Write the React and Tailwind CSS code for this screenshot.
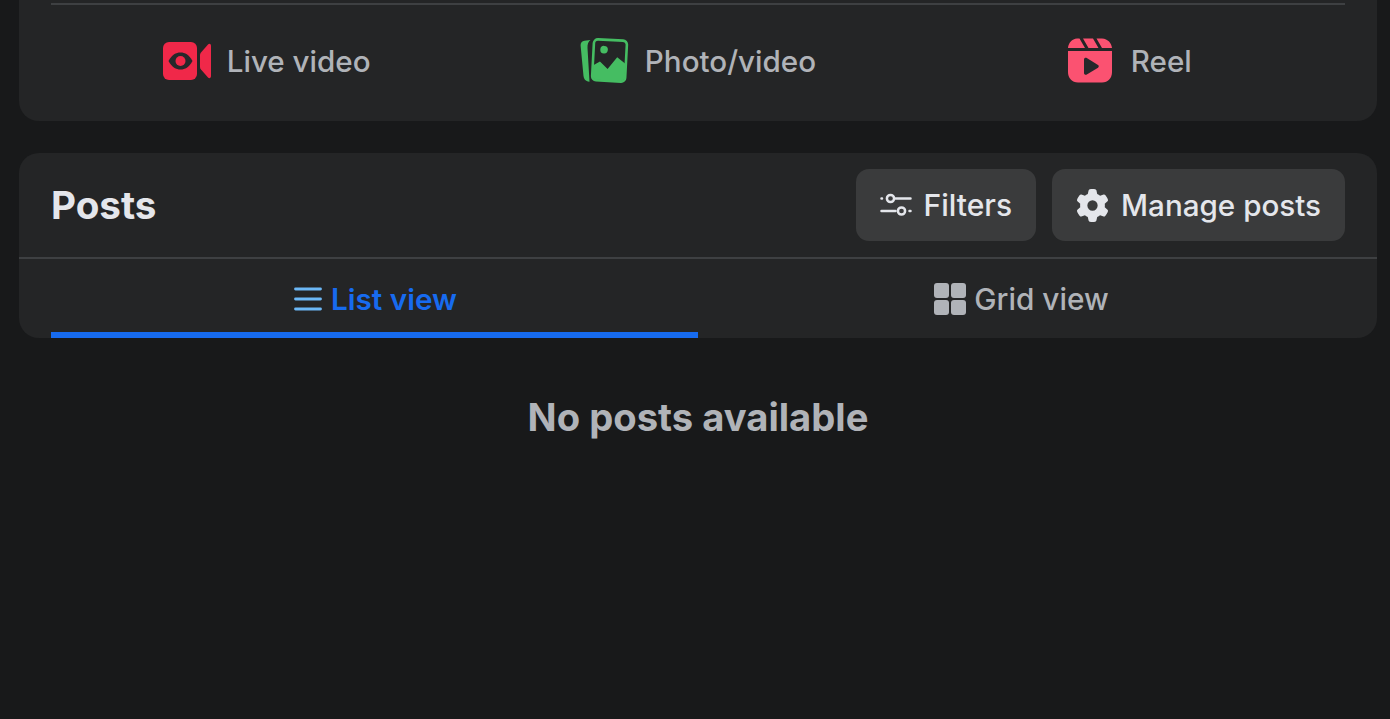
import { FaGear } from 'react-icons/fa6';

const LiveIcon = () => (
  <svg width="48" height="38" viewBox="0 0 48 38" className="shrink-0">
    <rect x="0" y="0" width="34" height="38" rx="6" fill="#f02849" />
    <path d="M38 10.500 45 2.500C46.400 1.200 48 2 48 4V34C48 36 46.400 36.800 45 35.500L38 27.500C37.400 26.800 37 26 37 25V13C37 12 37.400 11.200 38 10.500Z" fill="#f02849" />
    <path d="M5.500 19C9 12.500 13 10.500 17.500 10.500S26 12.500 29.500 19C26 25.500 22 27.500 17.500 27.500S9 25.500 5.500 19Z" fill="#26282b" />
    <circle cx="17.500" cy="19" r="5" fill="#f02849" />
  </svg>
);

const PhotoIcon = () => (
  <svg width="49" height="46" viewBox="0 0 49 46" className="shrink-0">
    <path d="M10.500 2 4.500 2.800C2 3.200 .4 5 .6 7.500L3.500 38C3.800 41 5.500 43 8 43.500L9.500 43.800 7.500 10C7.300 6 8.500 3.500 10.500 2Z" fill="#45bd62" />
    <g transform="rotate(3 30 23)">
      <rect x="13" y="2" width="33" height="41" rx="4" fill="#242526" stroke="#45bd62" strokeWidth="2.600" />
      <circle cx="23.500" cy="12" r="3.800" fill="#45bd62" />
      <path d="M13.500 28 20 24 28 31 37 19 45.500 25V38.500C45.500 41 44 42.500 41.500 42.500H17.500C15 42.500 13.500 41 13.500 38.500Z" fill="#45bd62" />
    </g>
  </svg>
);

const ReelIcon = () => (
  <svg width="46" height="45" viewBox="0 0 46 45" className="shrink-0">
    <path d="M1 13V34C1 40 5 44.500 11 44.500H35C41 44.500 45 40 45 34V13Z" fill="#fb5271" />
    <path d="M1 10C1.500 5 5 1 10 .6H12.500L18 10ZM16 .5H26L31.500 10H21.500ZM29.500 .5H35C41 1 44.500 5 45 10H35Z" fill="#fb5271" />
    <path d="M17 21.500C17 20 18.500 19.300 19.800 20L31 27C32 27.700 32 29 31 29.700L19.800 36.500C18.500 37.200 17 36.500 17 35Z" fill="#26282b" />
  </svg>
);

const FiltersIcon = () => (
  <svg width="32" height="24" viewBox="0 0 32 24" className="shrink-0" fill="none" stroke="#e4e6eb" strokeWidth="2.500" strokeLinecap="round">
    <path d="M1.500 5.500H2M15.500 5.500H30.500M1.500 18H15.500M29.500 18H30.500" />
    <circle cx="10.500" cy="5.500" r="3.600" />
    <circle cx="21.500" cy="18" r="3.600" />
  </svg>
);

const ListIcon = () => (
  <svg width="28" height="26" viewBox="0 0 28 26" className="shrink-0" stroke="#6cb8f6" strokeWidth="2.800" strokeLinecap="round">
    <path d="M1.500 3H26.500M1.500 13H26.500M1.500 23H26.500" />
  </svg>
);

const GridIcon = () => (
  <div className="grid grid-cols-2 gap-[2px] w-8 h-8 shrink-0">
    <div className="bg-[#b0b3b8] rounded-[3px]" />
    <div className="bg-[#b0b3b8] rounded-[3px]" />
    <div className="bg-[#b0b3b8] rounded-[3px]" />
    <div className="bg-[#b0b3b8] rounded-[3px]" />
  </div>
);

const ComposerAction = ({ icon, label, gap }) => (
  <div className={`flex-1 flex items-center justify-center ${gap}`}>
    {icon}
    <span className="pt-[1px] text-[29.6px] font-medium text-[#b0b3b8]">{label}</span>
  </div>
);

const HeaderButton = ({ icon, label, textSize }) => (
  <button className={`h-[72px] px-6 flex items-center gap-3 bg-[#3a3b3c] rounded-[13px] text-[#e4e6eb] font-medium ${textSize}`}>
    {icon}
    {label}
  </button>
);

const App = () => {
  return (
    <div className="h-[719px] overflow-hidden bg-[#18191a] pl-[19px] pr-[13px] font-['Inter',sans-serif]">
      <div className="h-[121px] bg-[#242526] rounded-b-[20px] px-8 pt-[3px] flex flex-col">
        <div className="h-[2px] bg-[#3e4042]" />
        <div className="flex-1 flex items-center pb-[4px]">
          <ComposerAction icon={<LiveIcon />} label="Live video" gap="gap-4" />
          <ComposerAction icon={<PhotoIcon />} label="Photo/video" gap="gap-4" />
          <ComposerAction icon={<ReelIcon />} label="Reel" gap="gap-[18px]" />
        </div>
      </div>

      <div className="mt-8 h-[185px] bg-[#242526] rounded-[20px] flex flex-col">
        <div className="h-[104px] px-8 flex items-center justify-between">
          <h2 className="pt-[2px] text-[38.600px] font-bold text-[#e4e6eb]">Posts</h2>
          <div className="flex gap-4">
            <HeaderButton icon={<FiltersIcon />} label="Filters" textSize="text-[30px]" />
            <HeaderButton icon={<FaGear size={33} color="#e4e6eb" />} label="Manage posts" textSize="text-[29.600px]" />
          </div>
        </div>
        <div className="h-[2px] bg-[#3e4042]" />
        <div className="flex-1 flex px-8">
          <div className="w-1/2 flex items-center justify-center gap-[9px] border-b-[6px] border-[#176bef] pt-[7px] pl-[2px]">
            <ListIcon />
            <span className="text-[29.700px] font-semibold text-[#176bef]">List view</span>
          </div>
          <div className="w-1/2 flex items-center justify-center gap-2 pt-[6px] pb-[5px]">
            <GridIcon />
            <span className="text-[29.800px] font-medium text-[#b0b3b8]">Grid view</span>
          </div>
        </div>
      </div>

      <p className="mt-[54px] text-center text-[38.200px] leading-[50px] font-bold text-[#b0b3b8]">No posts available</p>
    </div>
  );
};

export default App;
